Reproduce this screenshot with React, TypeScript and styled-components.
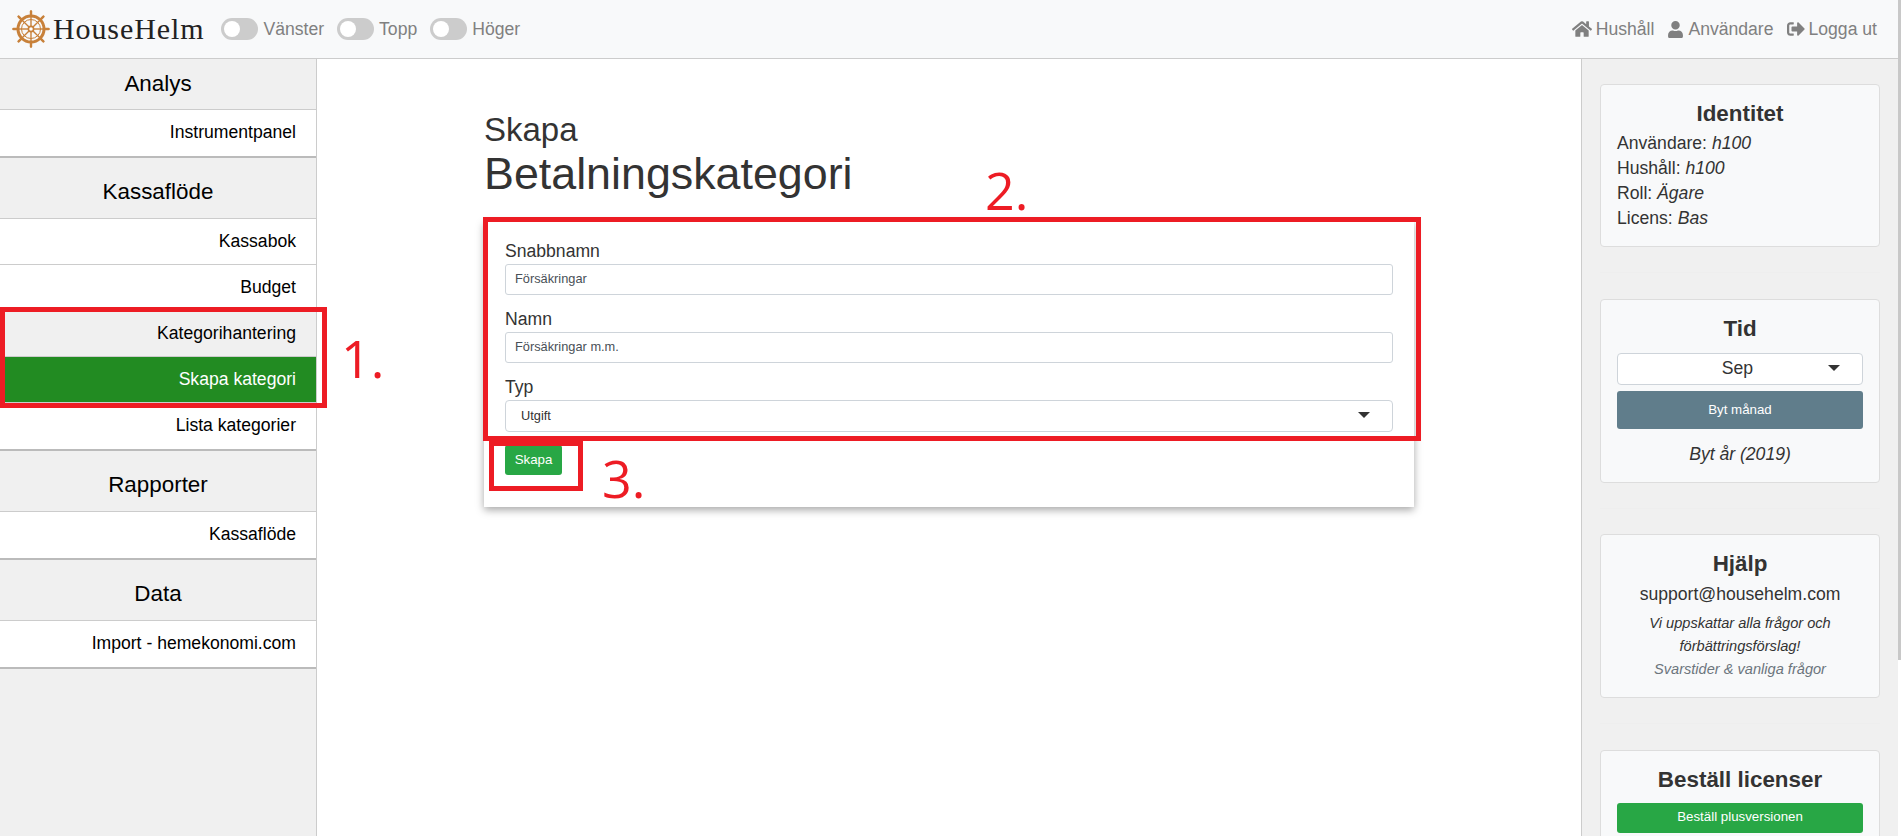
import styled, { createGlobalStyle } from 'styled-components';
import { FaHome, FaUser, FaSignOutAlt } from 'react-icons/fa';

const GlobalStyle = createGlobalStyle`
  html, body {
    margin: 0;
    height: 100%;
    overflow: hidden;
    background: #fff;
    font-family: "Liberation Sans", Arial, sans-serif;
    color: #333;
  }
  * { box-sizing: border-box; }
`;

const Page = styled.div`
  position: relative;
  width: 1901px;
  height: 836px;
  overflow: hidden;
`;

const Scrollbar = styled.div`
  position: absolute;
  right: 0;
  top: 0;
  width: 3px;
  height: 660px;
  background: #c8c8c8;
`;

const Navbar = styled.nav`
  width: 1898px;
  height: 59px;
  background: #f8f9fa;
  border-bottom: 1px solid #ccc;
  display: flex;
  align-items: center;
  padding: 0 21px 0 12px;
`;

const Brand = styled.div`
  display: flex;
  align-items: center;
  gap: 3px;
  font-family: "Liberation Serif", serif;
  font-size: 30px;
  letter-spacing: 0.9px;
  color: #222;
  margin-right: 17px;
`;

const ToggleGroup = styled.div`
  display: flex;
  align-items: center;
  gap: 13px;
`;

const ToggleItem = styled.label`
  display: flex;
  align-items: center;
  gap: 5px;
  font-size: 17.6px;
  color: #808080;
`;

const Toggle = styled.span`
  position: relative;
  display: block;
  width: 37px;
  height: 22px;
  border-radius: 11px;
  background: #ccc;

  &::before {
    content: '';
    position: absolute;
    left: 3px;
    top: 3px;
    width: 16px;
    height: 16px;
    border-radius: 50%;
    background: #fff;
  }
`;

const NavLinks = styled.div`
  margin-left: auto;
  display: flex;
  align-items: center;
  gap: 13px;
`;

const NavLink = styled.a`
  display: flex;
  align-items: center;
  gap: 4px;
  font-size: 17.6px;
  color: #808080;
`;

const Body = styled.div`
  display: flex;
  width: 1898px;
  height: 777px;
`;

const LeftNav = styled.aside`
  width: 317px;
  flex: none;
  background: #f0f0f0;
  border-right: 1px solid #ccc;
`;

const Group = styled.div`
  border-bottom: 2px solid #bbb;
`;

const GroupTitle = styled.div<{ $tall?: boolean }>`
  height: ${(p) => (p.$tall ? 61 : 51)}px;
  padding-top: ${(p) => (p.$tall ? 8 : 0)}px;
  display: flex;
  align-items: center;
  justify-content: center;
  font-size: 22.4px;
  color: #000;
  border-bottom: 1px solid #ccc;
`;

const NavItem = styled.a<{ $active?: boolean; $muted?: boolean }>`
  display: block;
  height: 46px;
  line-height: 45px;
  padding-right: 20px;
  text-align: right;
  font-size: 17.6px;
  color: ${(p) => (p.$active ? '#fff' : '#000')};
  background: ${(p) => (p.$active ? '#228b22' : p.$muted ? '#f0f0f0' : '#fff')};
  border-bottom: 1px solid #ccc;

  &:last-child {
    border-bottom: none;
  }
`;

const Main = styled.main`
  flex: 1;
  background: #fff;
  padding: 52px 0 0 167px;
`;

const TitleSmall = styled.div`
  font-size: 33px;
  line-height: 38px;
`;

const TitleLarge = styled.h1`
  margin: 0 0 24px;
  font-size: 44.8px;
  line-height: 48px;
  font-weight: 400;
`;

const FormCard = styled.div`
  width: 930px;
  height: 286px;
  padding: 20px 21px;
  background: #fff;
  box-shadow: 0 3px 8px rgba(0, 0, 0, 0.35);
`;

const Field = styled.div`
  margin-bottom: 14px;

  &:last-of-type {
    margin-bottom: 13px;
  }
`;

const Label = styled.div`
  font-size: 17.6px;
  line-height: 21px;
  margin-bottom: 2px;
`;

const Input = styled.div`
  height: 31px;
  line-height: 28px;
  padding: 0 9px;
  font-size: 12.8px;
  color: #495057;
  background: #fff;
  border: 1px solid #ced4da;
  border-radius: 3px;
`;

const SelectBox = styled.div<{ $center?: boolean }>`
  position: relative;
  height: 32px;
  line-height: 29px;
  padding: 0 ${(p) => (p.$center ? 5 : 15)}px 0 ${(p) => (p.$center ? 0 : 15)}px;
  font-size: ${(p) => (p.$center ? 17.6 : 12.8)}px;
  text-align: ${(p) => (p.$center ? 'center' : 'left')};
  color: #333;
  background: #fff;
  border: 1px solid #ced4da;
  border-radius: 4px;

  &::after {
    content: '';
    position: absolute;
    right: 22px;
    top: 11px;
    border-left: 6px solid transparent;
    border-right: 6px solid transparent;
    border-top: 6px solid #333;
  }
`;

const Button = styled.button<{ $tone: 'green' | 'slate'; $block?: boolean; $height: number; $top?: number }>`
  display: block;
  width: ${(p) => (p.$block ? '100%' : '57px')};
  height: ${(p) => p.$height}px;
  margin-top: ${(p) => p.$top ?? 0}px;
  padding: 0 0 ${(p) => (p.$tone === 'green' ? 2 : 0)}px;
  border: none;
  border-radius: 3px;
  font-family: inherit;
  font-size: 13.3px;
  color: #fff;
  background: ${(p) => (p.$tone === 'green' ? '#28a745' : '#607d8b')};
`;

const RightPanel = styled.aside`
  width: 317px;
  flex: none;
  background: #f0f0f0;
  border-left: 1px solid #ccc;
  padding: 25px 18px 0 18px;
`;

const InfoCard = styled.section`
  background: #f8f9fa;
  border: 1px solid #ddd;
  border-radius: 4px;
  padding: 15px 16px 16px;
`;

const CardTitle = styled.h2<{ $gap: number }>`
  margin: 0 0 ${(p) => p.$gap}px;
  font-size: 22.4px;
  line-height: 27px;
  font-weight: 700;
  text-align: center;
`;

const InfoLine = styled.div`
  font-size: 17.6px;
  line-height: 25px;

  &:last-child {
    margin-bottom: -1px;
  }
`;

const Centered = styled.div<{ $size: number; $muted?: boolean; $italic?: boolean; $line: number; $top?: number }>`
  margin-top: ${(p) => p.$top ?? 0}px;
  font-size: ${(p) => p.$size}px;
  line-height: ${(p) => p.$line}px;
  text-align: center;
  font-style: ${(p) => (p.$italic ? 'italic' : 'normal')};
  color: ${(p) => (p.$muted ? '#6c757d' : 'inherit')};
`;

const Divider = styled.hr`
  margin: 25px 0 25.5px;
  border: none;
  border-top: 1px solid #eee;
`;

// The red annotations sit on top of the screenshot
const Callout = styled.div<{ $x: number; $y: number; $w: number; $h: number }>`
  position: absolute;
  left: ${(p) => p.$x}px;
  top: ${(p) => p.$y}px;
  width: ${(p) => p.$w}px;
  height: ${(p) => p.$h}px;
  border: 5px solid #ed1c24;
`;

const CalloutNumber = styled.div<{ $x: number; $y: number }>`
  position: absolute;
  left: ${(p) => p.$x}px;
  top: ${(p) => p.$y}px;
  font-family: "Open Sans", sans-serif;
  font-size: 52px;
  line-height: 60px;
  color: #ed1c24;
`;

function HelmLogo() {
  const spokes = [0, 45, 90, 135, 180, 225, 270, 315];
  return (
    <svg width="38" height="38" viewBox="0 0 38 38">
      <g stroke="#c8813a" fill="none">
        <circle cx="19" cy="19" r="13" strokeWidth="3" />
        <circle cx="19" cy="19" r="9.5" strokeWidth="1" />
        {spokes.map((a) => (
          <g key={a} transform={`rotate(${a} 19 19)`}>
            <line x1="19" y1="19" x2="19" y2="0.5" strokeWidth="1.4" />
            <line x1="19" y1="5" x2="19" y2="1.5" strokeWidth="2.4" strokeLinecap="round" />
          </g>
        ))}
        <circle cx="19" cy="19" r="2.6" fill="#fff" strokeWidth="1.6" />
      </g>
    </svg>
  );
}

export default function App() {
  return (
    <Page>
      <GlobalStyle />
      <Navbar>
        <Brand>
          <HelmLogo />
          HouseHelm
        </Brand>
        <ToggleGroup>
          <ToggleItem><Toggle />Vänster</ToggleItem>
          <ToggleItem><Toggle />Topp</ToggleItem>
          <ToggleItem><Toggle />Höger</ToggleItem>
        </ToggleGroup>
        <NavLinks>
          <NavLink><FaHome size={20} />Hushåll</NavLink>
          <NavLink><FaUser size={17} />Användare</NavLink>
          <NavLink><FaSignOutAlt size={18} />Logga ut</NavLink>
        </NavLinks>
      </Navbar>
      <Body>
        <LeftNav>
          <Group>
            <GroupTitle>Analys</GroupTitle>
            <NavItem>Instrumentpanel</NavItem>
          </Group>
          <Group>
            <GroupTitle $tall>Kassaflöde</GroupTitle>
            <NavItem>Kassabok</NavItem>
            <NavItem>Budget</NavItem>
            <NavItem $muted>Kategorihantering</NavItem>
            <NavItem $active>Skapa kategori</NavItem>
            <NavItem>Lista kategorier</NavItem>
          </Group>
          <Group>
            <GroupTitle $tall>Rapporter</GroupTitle>
            <NavItem>Kassaflöde</NavItem>
          </Group>
          <Group>
            <GroupTitle $tall>Data</GroupTitle>
            <NavItem>Import - hemekonomi.com</NavItem>
          </Group>
        </LeftNav>
        <Main>
          <TitleSmall>Skapa</TitleSmall>
          <TitleLarge>Betalningskategori</TitleLarge>
          <FormCard>
            <Field>
              <Label>Snabbnamn</Label>
              <Input>Försäkringar</Input>
            </Field>
            <Field>
              <Label>Namn</Label>
              <Input>Försäkringar m.m.</Input>
            </Field>
            <Field>
              <Label>Typ</Label>
              <SelectBox>Utgift</SelectBox>
            </Field>
            <Button $tone="green" $height={30}>Skapa</Button>
          </FormCard>
        </Main>
        <RightPanel>
          <InfoCard>
            <CardTitle $gap={4}>Identitet</CardTitle>
            <InfoLine>Användare: <em>h100</em></InfoLine>
            <InfoLine>Hushåll: <em>h100</em></InfoLine>
            <InfoLine>Roll: <em>Ägare</em></InfoLine>
            <InfoLine>Licens: <em>Bas</em></InfoLine>
          </InfoCard>
          <Divider />
          <InfoCard>
            <CardTitle $gap={11}>Tid</CardTitle>
            <SelectBox $center>Sep</SelectBox>
            <Button $tone="slate" $block $height={38} $top={6}>Byt månad</Button>
            <Centered $size={17.6} $italic $line={24} $top={13}>Byt år (2019)</Centered>
          </InfoCard>
          <Divider />
          <InfoCard>
            <CardTitle $gap={4}>Hjälp</CardTitle>
            <Centered $size={17.6} $line={26}>support@househelm.com</Centered>
            <Centered $size={14.6} $italic $line={23} $top={5}>Vi uppskattar alla frågor och förbättringsförslag!</Centered>
            <Centered $size={14.6} $italic $muted $line={23}>Svarstider &amp; vanliga frågor</Centered>
          </InfoCard>
          <Divider />
          <InfoCard>
            <CardTitle $gap={10}>Beställ licenser</CardTitle>
            <Button $tone="green" $block $height={30}>Beställ plusversionen</Button>
          </InfoCard>
        </RightPanel>
      </Body>
      <Scrollbar />
      <Callout $x={0} $y={307} $w={327} $h={101} />
      <Callout $x={483} $y={217} $w={938} $h={224} />
      <Callout $x={489} $y={441} $w={94} $h={50} />
      <CalloutNumber $x={341} $y={328}>1.</CalloutNumber>
      <CalloutNumber $x={985} $y={160}>2.</CalloutNumber>
      <CalloutNumber $x={602} $y={448}>3.</CalloutNumber>
    </Page>
  );
}
